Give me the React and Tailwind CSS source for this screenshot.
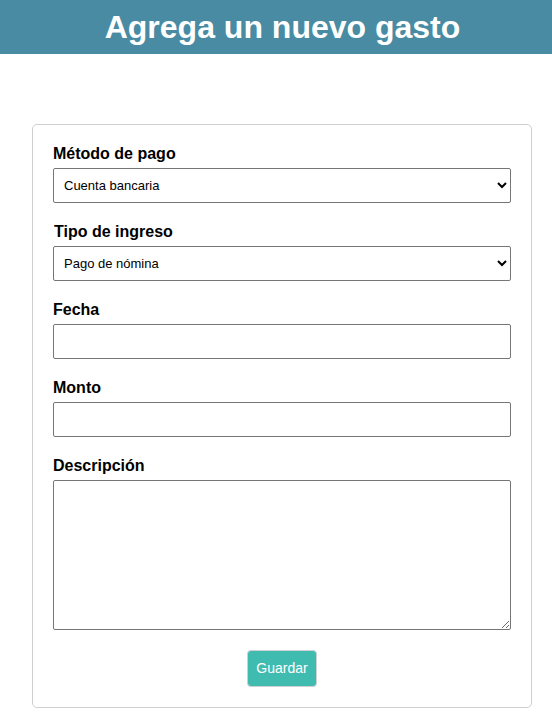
import React, { useState } from 'react';

function App() {
  const [metodo, setMetodo] = useState('banco');
  const [tipo, setTipo] = useState('nomina');
  const [fecha, setFecha] = useState('');
  const [monto, setMonto] = useState('');
  const [descripcion, setDescripcion] = useState('');

  const labelClass = 'block text-[16px] leading-[18px] font-bold text-black mb-[5px]';
  const fieldClass =
    'block w-full h-[35px] border border-[#767676] rounded-[2px] bg-white text-[13px] text-black px-[10px] outline-none';

  return (
    <div className="min-h-[722px] bg-white font-['Liberation_Sans',Arial,sans-serif]">
      <header className="h-[54px] bg-[#488ba3] flex items-center justify-center">
        <h1 className="text-[32px] leading-none font-bold text-white ml-[13px]">Agrega un nuevo gasto</h1>
      </header>

      <form
        className="mx-[32px] mt-[70px] w-[500px] border border-[#cfcfcf] rounded-[5px] p-[20px] bg-white"
        onSubmit={(e) => e.preventDefault()}
      >
        {/* Método de pago */}
        <div className="mb-[20px]">
          <label className={labelClass}>Método de pago</label>
          <select value={metodo} onChange={(e) => setMetodo(e.target.value)} className={fieldClass + ' pl-[6px]'}>
            <option value="banco">Cuenta bancaria</option>
            <option value="efectivo">Efectivo</option>
            <option value="tarjeta">Tarjeta de crédito</option>
          </select>
        </div>

        {/* Tipo de ingreso */}
        <div className="mb-[20px]">
          <label className={labelClass + ' pl-px'}>Tipo de ingreso</label>
          <select value={tipo} onChange={(e) => setTipo(e.target.value)} className={fieldClass + ' pl-[6px]'}>
            <option value="nomina">Pago de nómina</option>
            <option value="extra">Ingreso extra</option>
          </select>
        </div>

        <div className="mb-[20px]">
          <label className={labelClass}>Fecha</label>
          <input type="text" value={fecha} onChange={(e) => setFecha(e.target.value)} className={fieldClass} />
        </div>

        <div className="mb-[20px]">
          <label className={labelClass}>Monto</label>
          <input type="text" value={monto} onChange={(e) => setMonto(e.target.value)} className={fieldClass} />
        </div>

        <div>
          <label className={labelClass}>Descripción</label>
          <textarea
            value={descripcion}
            onChange={(e) => setDescripcion(e.target.value)}
            className="block w-full h-[150px] border border-[#767676] rounded-[2px] bg-white text-[13px] p-[4px] outline-none"
          />
        </div>

        <div className="flex justify-center mt-[20px]">
          <button
            type="submit"
            className="h-[37px] px-[8px] bg-[#3fbbb0] text-white text-[14px] rounded-[4px] border border-[#d0d0d0]"
          >
            Guardar
          </button>
        </div>
      </form>
    </div>
  );
}

export default App;
